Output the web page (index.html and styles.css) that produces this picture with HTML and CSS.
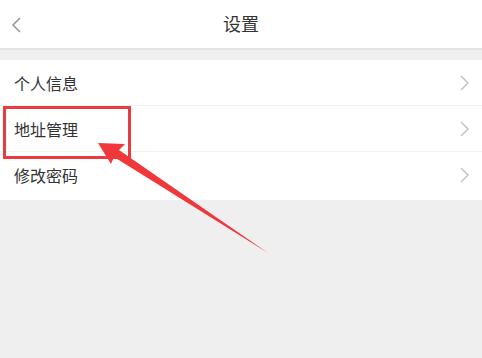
FILE: index.html
```html
<!DOCTYPE html>
<html lang="zh">
<head>
<meta charset="utf-8">
<link rel="stylesheet" href="styles.css">
</head>
<body>
<div class="page">
  <header class="nav">
    <svg class="back" width="14" height="20" viewBox="0 0 14 20"><path d="M11 3 L4 10 L11 17" fill="none" stroke="#9a9a9a" stroke-width="1.6"/></svg>
    <h1 class="title">设置</h1>
  </header>
  <ul class="list">
    <li class="row"><span class="label">个人信息</span><svg class="chev" width="12" height="20" viewBox="0 0 12 20"><path d="M3 3 L10 10 L3 17" fill="none" stroke="#c4c4c4" stroke-width="1.5"/></svg></li>
    <li class="row"><span class="label">地址管理</span><svg class="chev" width="12" height="20" viewBox="0 0 12 20"><path d="M3 3 L10 10 L3 17" fill="none" stroke="#c4c4c4" stroke-width="1.5"/></svg></li>
    <li class="row"><span class="label">修改密码</span><svg class="chev" width="12" height="20" viewBox="0 0 12 20"><path d="M3 3 L10 10 L3 17" fill="none" stroke="#c4c4c4" stroke-width="1.5"/></svg></li>
  </ul>
  <div class="highlight"></div>
  <svg class="arrow" width="482" height="358" viewBox="0 0 482 358"><polygon points="98,143 125,144 119,150 268,253 114,157 111,164" fill="#f0373a"/></svg>
</div>
</body>
</html>
```
FILE: styles.css
```css
* { box-sizing: border-box; }
html, body { margin: 0; padding: 0; }
body {
  width: 482px;
  height: 358px;
  background: #efefef;
  font-family: "Noto Sans CJK SC", "Noto Sans", sans-serif;
  overflow: hidden;
}
.page { position: relative; width: 482px; height: 358px; }
.nav {
  height: 50px;
  background: #fff;
  border-bottom: 2px solid #e3e3e3;
  display: flex;
  align-items: center;
  justify-content: center;
  position: relative;
}
.back { position: absolute; left: 9px; top: 15px; }
.title {
  margin: 0;
  font-size: 18px;
  font-weight: normal;
  color: #333;
  line-height: 1;
  margin-top: -2px;
}
.list {
  list-style: none;
  margin: 10px 0 0;
  padding: 0;
  background: #fff;
}
.row {
  height: 46px;
  display: flex;
  align-items: center;
  justify-content: space-between;
  padding: 0 14px 0 14px;
  border-bottom: 1px solid #f2f2f2;
}
.row:last-child { border-bottom: none; height: 48px; padding-bottom: 2px; }
.label { font-size: 16px; color: #333; line-height: 1; }
.chev { margin-right: -2px; }
.highlight {
  position: absolute;
  left: 3px;
  top: 106px;
  width: 128px;
  height: 53px;
  border: 3px solid #ea3c3f;
}
.arrow { position: absolute; left: 0; top: 0; }
```
